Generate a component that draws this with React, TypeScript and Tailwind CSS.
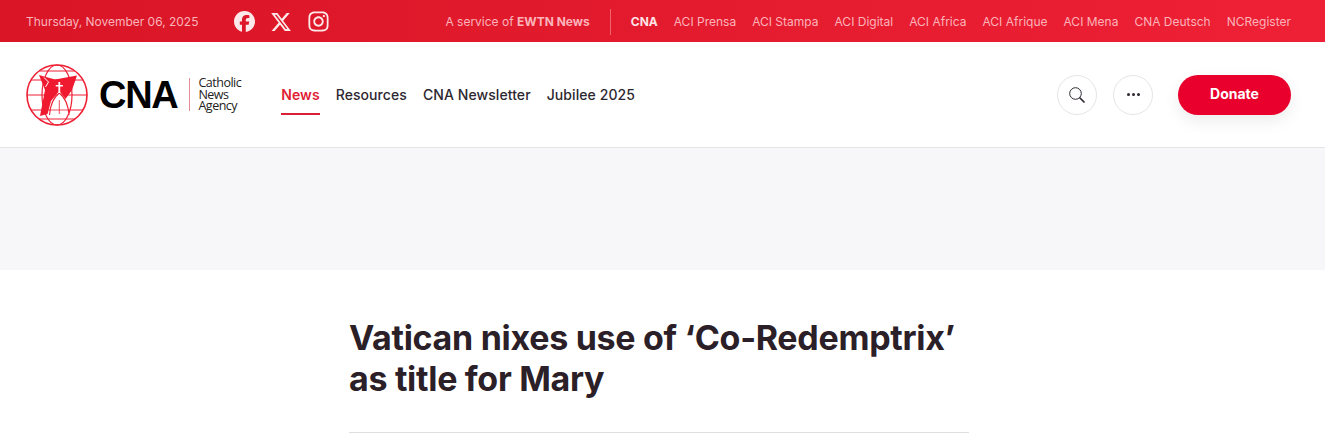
import { FaFacebook, FaInstagram, FaXTwitter } from "react-icons/fa6";

const sites = ["ACI Prensa", "ACI Stampa", "ACI Digital", "ACI Africa", "ACI Afrique", "ACI Mena", "CNA Deutsch", "NCRegister"];
const navLinks = ["Resources", "CNA Newsletter", "Jubilee 2025"];

const Logo = () => (
  <svg width="64" height="62" viewBox="0 0 64 62" fill="none" className="shrink-0">
    <g stroke="#ee2035" strokeWidth="1.2">
      <circle cx="31" cy="31" r="30" strokeWidth="1.6" />
      <ellipse cx="31" cy="31" rx="15" ry="30" />
      <path d="M1 31h60M5 16h52M5 46h52M13 7h36M13 55h36" />
    </g>
    {/* wings */}
    <path d="M13 11 L29 15.5 L51 11.5 L46 26 L39.5 35 L33.3 27 L25 37 L21.5 50 L14 52 L19 26 Z" fill="#f01a30" />
    <path d="M18 13.5 L22.5 18 L19.5 23" stroke="#fff" strokeWidth="1" />
    {/* dome */}
    <path d="M23.5 50 Q24.5 36 33.3 29 Q42 36 43 50 Z" fill="#fff" />
    <path d="M23.5 51 Q24.5 36 33.3 29 Q42 36 43 51" stroke="#ee2035" strokeWidth="1.1" />
    <path d="M24 46h19M33.3 36v14" stroke="#ee2035" strokeWidth="0.8" />
    {/* cross */}
    <path d="M32.4 18h1.8v3h2.7v1.6h-2.7V29h-1.8v-6.4h-2.7V21h2.7z" fill="#fff" />
  </svg>
);

const SearchIcon = () => (
  <svg width="16" height="16" viewBox="0 0 16 16" fill="none" stroke="#2d2730">
    <circle cx="6.5" cy="6.5" r="5.8" strokeWidth="1" />
    <path d="M11 11l4 4" strokeWidth="1.7" strokeLinecap="round" />
  </svg>
);

export default function App() {
  return (
    <div className="h-[437px] overflow-hidden bg-white font-['Inter',sans-serif]">
      <div className="flex h-[42px] items-center justify-between bg-gradient-to-r from-[#d91526] to-[#ee2035] pl-[26px] pr-[34px] pt-px text-[12px] text-[#fbb4bb]">
        <div className="flex items-center">
          <span className="w-[208px] tracking-[-0.02px]">Thursday, November 06, 2025</span>
          <div className="flex items-center gap-[15px] text-[21px] text-[#fde9ea]">
            <FaFacebook />
            <FaXTwitter className="text-[22px]" />
            <FaInstagram className="text-[23px]" />
          </div>
        </div>
        <div className="flex items-center">
          <span>A service of <b className="font-bold">EWTN News</b></span>
          <span className="mx-[20px] h-[26px] w-px bg-[#f2626f]" />
          <div className="flex items-center gap-[16px]">
            <b className="font-bold text-[#fde4e6]">CNA</b>
            {sites.map((s) => (
              <span key={s}>{s}</span>
            ))}
          </div>
        </div>
      </div>

      <header className="flex h-[106px] items-center justify-between border-b border-[#e5e5e8] pl-[26px] pr-[34px]">
        <div className="flex items-center">
          <Logo />
          <span className="ml-[9px] font-['Liberation_Sans',sans-serif] text-[38px] font-bold leading-none tracking-[-1.3px] text-black">CNA</span>
          <span className="ml-[12px] h-[33px] w-px bg-[#e58b95]" />
          <div className="ml-[8px] font-['Open_Sans',sans-serif] text-[12.5px] leading-[11.7px] tracking-[-0.5px] text-[#222]">
            <div>Catholic</div>
            <div>News</div>
            <div>Agency</div>
          </div>
          <nav className="ml-[40px] flex items-center gap-[16px] text-[14px] font-medium tracking-[0.08px] text-[#2d2730]">
            <span className="flex h-[41px] items-center border-b-2 border-[#d91f33] pt-[2px] font-semibold text-[#e11d33]">News</span>
            {navLinks.map((l) => (
              <span key={l}>{l}</span>
            ))}
          </nav>
        </div>
        <div className="flex items-center">
          <button className="flex size-[40px] items-center justify-center rounded-full border border-[#e5e5e8]">
            <SearchIcon />
          </button>
          <button className="ml-[16px] flex size-[40px] items-center justify-center gap-[2px] rounded-full border border-[#e5e5e8]">
            <span className="size-[3px] rounded-full bg-[#2d2730]" />
            <span className="size-[3px] rounded-full bg-[#2d2730]" />
            <span className="size-[3px] rounded-full bg-[#2d2730]" />
          </button>
          <button className="ml-[25px] h-[40px] w-[113px] rounded-full bg-[#e9002d] pb-[2px] text-[14px] font-bold text-white shadow-[0_6px_16px_rgba(0,0,0,0.08)]">
            Donate
          </button>
        </div>
      </header>

      <div className="h-[122px] bg-[#f7f7f9]" />

      <main className="ml-[349px] w-[620px] pt-[47px]">
        <h1 className="border-b border-[#dededf] pb-[33px] text-[34px] font-bold leading-[41px] tracking-[-0.3px] text-[#2b2027]">
          Vatican nixes use of ‘Co-Redemptrix’ as title for Mary
        </h1>
      </main>
    </div>
  );
}
